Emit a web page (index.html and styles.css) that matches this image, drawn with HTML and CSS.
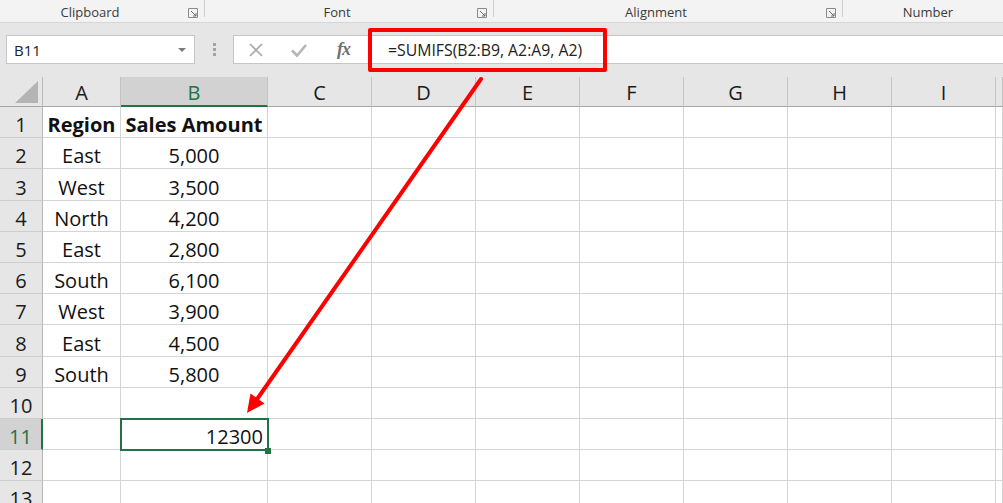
FILE: index.html
```html
<!DOCTYPE html>
<html>
<head>
<meta charset="utf-8">
<link rel="stylesheet" href="styles.css">
</head>
<body>
<div class="app">
  <div class="ribbon">
    <div class="grp g-clip"><span class="lbl">Clipboard</span><svg class="launch" width="10" height="10" viewBox="0 0 10 10"><path d="M0.5 0.5H9.5V9.5H0.5Z" fill="none" stroke="#8a8a8a"/><path d="M3 3L8 8M8 5V8H5" fill="none" stroke="#6a6a6a"/></svg></div>
    <div class="grp g-font"><span class="lbl">Font</span><svg class="launch" width="10" height="10" viewBox="0 0 10 10"><path d="M0.5 0.5H9.5V9.5H0.5Z" fill="none" stroke="#8a8a8a"/><path d="M3 3L8 8M8 5V8H5" fill="none" stroke="#6a6a6a"/></svg></div>
    <div class="grp g-align"><span class="lbl">Alignment</span><svg class="launch" width="10" height="10" viewBox="0 0 10 10"><path d="M0.5 0.5H9.5V9.5H0.5Z" fill="none" stroke="#8a8a8a"/><path d="M3 3L8 8M8 5V8H5" fill="none" stroke="#6a6a6a"/></svg></div>
    <div class="grp g-num"><span class="lbl">Number</span></div>
  </div>

  <div class="toolbar">
    <div class="namebox"><span class="ref">B11</span><span class="caret"></span></div>
    <div class="dots"><i></i><i></i><i></i></div>
    <div class="fbar">
      <div class="fbtns">
        <svg class="ico-x" width="16" height="16" viewBox="0 0 16 16"><path d="M2 2L14 14M14 2L2 14" stroke="#a8a8a8" stroke-width="1.6" fill="none"/></svg>
        <svg class="ico-ok" width="18" height="16" viewBox="0 0 18 16"><path d="M2 8.5L7 13.5L16 3" stroke="#b5b5b5" stroke-width="2.6" fill="none"/></svg>
        <span class="fx">fx</span>
      </div>
      <div class="ftext">=SUMIFS(B2:B9, A2:A9, A2)</div>
    </div>
  </div>

  <div class="sheet">
    <div class="corner"><span class="tri"></span></div>
    <div class="ch">A</div><div class="ch selc">B</div><div class="ch">C</div><div class="ch">D</div><div class="ch">E</div><div class="ch">F</div><div class="ch">G</div><div class="ch">H</div><div class="ch">I</div><div class="ch"></div>

    <div class="rh">1</div><div class="c cen bold">Region</div><div class="c cen bold">Sales Amount</div><div class="c"></div><div class="c"></div><div class="c"></div><div class="c"></div><div class="c"></div><div class="c"></div><div class="c"></div><div class="c"></div>
    <div class="rh">2</div><div class="c cen">East</div><div class="c cen">5,000</div><div class="c"></div><div class="c"></div><div class="c"></div><div class="c"></div><div class="c"></div><div class="c"></div><div class="c"></div><div class="c"></div>
    <div class="rh">3</div><div class="c cen">West</div><div class="c cen">3,500</div><div class="c"></div><div class="c"></div><div class="c"></div><div class="c"></div><div class="c"></div><div class="c"></div><div class="c"></div><div class="c"></div>
    <div class="rh">4</div><div class="c cen">North</div><div class="c cen">4,200</div><div class="c"></div><div class="c"></div><div class="c"></div><div class="c"></div><div class="c"></div><div class="c"></div><div class="c"></div><div class="c"></div>
    <div class="rh">5</div><div class="c cen">East</div><div class="c cen">2,800</div><div class="c"></div><div class="c"></div><div class="c"></div><div class="c"></div><div class="c"></div><div class="c"></div><div class="c"></div><div class="c"></div>
    <div class="rh">6</div><div class="c cen">South</div><div class="c cen">6,100</div><div class="c"></div><div class="c"></div><div class="c"></div><div class="c"></div><div class="c"></div><div class="c"></div><div class="c"></div><div class="c"></div>
    <div class="rh">7</div><div class="c cen">West</div><div class="c cen">3,900</div><div class="c"></div><div class="c"></div><div class="c"></div><div class="c"></div><div class="c"></div><div class="c"></div><div class="c"></div><div class="c"></div>
    <div class="rh">8</div><div class="c cen">East</div><div class="c cen">4,500</div><div class="c"></div><div class="c"></div><div class="c"></div><div class="c"></div><div class="c"></div><div class="c"></div><div class="c"></div><div class="c"></div>
    <div class="rh">9</div><div class="c cen">South</div><div class="c cen">5,800</div><div class="c"></div><div class="c"></div><div class="c"></div><div class="c"></div><div class="c"></div><div class="c"></div><div class="c"></div><div class="c"></div>
    <div class="rh">10</div><div class="c"></div><div class="c"></div><div class="c"></div><div class="c"></div><div class="c"></div><div class="c"></div><div class="c"></div><div class="c"></div><div class="c"></div><div class="c"></div>
    <div class="rh selr">11</div><div class="c"></div><div class="c right sel">12300<span class="handle"></span></div><div class="c"></div><div class="c"></div><div class="c"></div><div class="c"></div><div class="c"></div><div class="c"></div><div class="c"></div><div class="c"></div>
    <div class="rh">12</div><div class="c"></div><div class="c"></div><div class="c"></div><div class="c"></div><div class="c"></div><div class="c"></div><div class="c"></div><div class="c"></div><div class="c"></div><div class="c"></div>
    <div class="rh">13</div><div class="c"></div><div class="c"></div><div class="c"></div><div class="c"></div><div class="c"></div><div class="c"></div><div class="c"></div><div class="c"></div><div class="c"></div><div class="c"></div>
  </div>

  <div class="redbox"></div>
  <svg class="arrow" width="1003" height="503" viewBox="0 0 1003 503">
    <line x1="481" y1="79" x2="257.5" y2="398.5" stroke="#ff0000" stroke-width="4" stroke-linecap="round"/>
    <polygon points="247,413 264.5,403.5 250.5,393.5" fill="#ff0000"/>
  </svg>
</div>
</body>
</html>
```

FILE: styles.css
```css
* { box-sizing: border-box; }
html, body { margin: 0; padding: 0; }
body {
  width: 1003px;
  height: 503px;
  overflow: hidden;
  background: #ffffff;
  font-family: "Open Sans", "Noto Sans", sans-serif;
}
.app { position: relative; width: 1003px; height: 503px; overflow: hidden; }

/* Ribbon group labels */
.ribbon {
  height: 23px;
  background: #f3f3f3;
  border-bottom: 1px solid #d6d6d6;
  display: flex;
}
.grp {
  position: relative;
  flex-shrink: 0;
  display: flex;
  align-items: center;
  padding-right: 24px;
  border-right: 1px solid #cfcfcf;
  height: 17px;
}
.grp .lbl {
  flex: 1;
  text-align: center;
  font-size: 13px;
  color: #3b3b3b;
  line-height: 17px;
  padding-top: 7px;
}
.grp .launch { position: absolute; right: 6px; top: 8px; }
.g-clip { width: 205px; }
.g-font { width: 289px; }
.g-align { width: 349px; }
.g-num { width: 170px; padding-right: 0; border-right: none; }

/* Name box + formula bar */
.toolbar {
  height: 54px;
  background: #e6e6e6;
  display: flex;
  align-items: flex-start;
  padding-top: 12px;
}
.namebox {
  margin-left: 6px;
  width: 189px;
  height: 29px;
  background: #fff;
  border: 1px solid #c6c6c6;
  display: flex;
  align-items: center;
  justify-content: space-between;
  padding: 0 8px 0 7px;
}
.namebox .ref { font-size: 15px; color: #222; }
.caret {
  width: 0; height: 0;
  border-left: 4px solid transparent;
  border-right: 4px solid transparent;
  border-top: 4px solid #7b7b7b;
}
.dots {
  width: 38px;
  height: 29px;
  display: flex;
  flex-direction: column;
  align-items: center;
  justify-content: center;
  gap: 2px;
}
.dots i { display: block; width: 3px; height: 3px; background: #a3a3a3; }
.fbar {
  flex: 1;
  height: 29px;
  background: #fff;
  border: 1px solid #c6c6c6;
  border-right: none;
  display: flex;
  align-items: center;
}
.fbtns {
  width: 135px;
  display: flex;
  align-items: center;
  height: 100%;
}
.ico-x { margin-left: 14px; }
.ico-ok { margin-left: 26px; }
.fx {
  margin-left: 29px;
  font-family: "Liberation Serif", "DejaVu Serif", serif;
  font-style: italic;
  font-weight: bold;
  font-size: 18px;
  color: #6f6f6f;
  letter-spacing: -1px;
}
.ftext {
  padding-left: 19px;
  font-size: 15.8px;
  color: #222;
}

/* Sheet grid */
.sheet {
  display: grid;
  grid-template-columns: 43px 78px 147px repeat(7, 104px) 1fr;
  grid-template-rows: 30px repeat(13, 31.2px);
  height: 426px;
  overflow: hidden;
}
.corner {
  background: #e6e6e6;
  border-right: 1px solid #b9b9b9;
  border-bottom: 1px solid #a6a6a6;
  position: relative;
}
.corner .tri {
  position: absolute;
  right: 4px; bottom: 3px;
  width: 0; height: 0;
  border-left: 23px solid transparent;
  border-bottom: 22px solid #b4b4b4;
}
.ch {
  background: #e6e6e6;
  border-right: 1px solid #c3c3c3;
  border-bottom: 1px solid #a6a6a6;
  display: flex;
  align-items: center;
  justify-content: center;
  font-size: 20px;
  color: #1b1b1b;
  padding-top: 2px;
}
.ch.selc {
  background: #d2d2d2;
  color: #217346;
  border-bottom: 2px solid #217346;
}
.rh {
  background: #e6e6e6;
  border-right: 1px solid #b9b9b9;
  border-bottom: 1px solid #cdcdcd;
  display: flex;
  align-items: flex-end;
  justify-content: center;
  font-size: 20px;
  line-height: 20px;
  padding-bottom: 2px;
  color: #1b1b1b;
}
.rh.selr {
  background: #d2d2d2;
  color: #217346;
  border-right: 2px solid #217346;
}
.c {
  border-right: 1px solid #d4d4d4;
  border-bottom: 1px solid #d4d4d4;
  display: flex;
  align-items: flex-end;
  font-size: 20px;
  line-height: 20px;
  padding-bottom: 2px;
  color: #111;
  white-space: nowrap;
  overflow: visible;
}
.c.cen { justify-content: center; }
.c.right { justify-content: flex-end; padding-right: 4px; }
.c.bold { font-weight: bold; }
.sel { position: relative; }
.sel::after {
  content: "";
  position: absolute;
  left: -1px; top: -1px; right: -2px; bottom: -2px;
  border: 2px solid #217346;
}
.handle {
  position: absolute;
  right: -4px; bottom: -5px;
  width: 6px; height: 6px;
  background: #217346;
  z-index: 2;
}

/* Annotations */
.redbox {
  position: absolute;
  left: 368px; top: 28px;
  width: 239px; height: 44px;
  border: 4px solid #ff0000;
  border-radius: 2px;
}
.arrow { position: absolute; left: 0; top: 0; pointer-events: none; }
```
